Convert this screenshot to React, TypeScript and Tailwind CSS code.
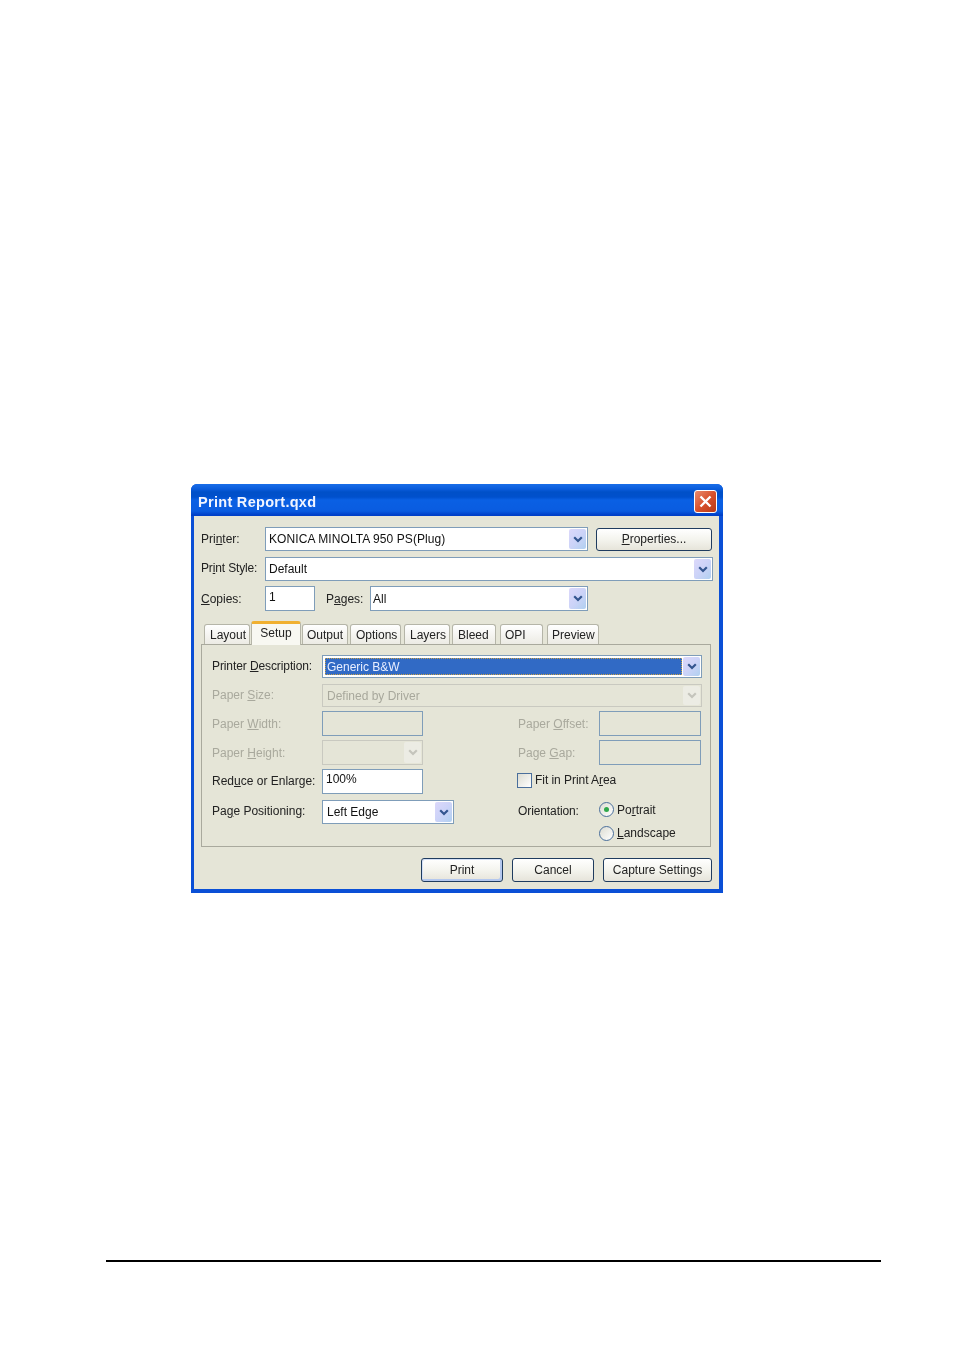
import React from 'react';

const Chevron = ({ disabled }: { disabled?: boolean }) => (
  <svg width="10" height="7" viewBox="0 0 10 7" fill="none">
    <path d="M1.2 1.2 L5 5 L8.8 1.2" stroke={disabled ? '#c4c4bc' : '#33558f'} strokeWidth="2.2" />
  </svg>
);

const Arrow = ({ disabled }: { disabled?: boolean }) => (
  <div
    className={
      disabled
        ? 'w-[17px] flex items-center justify-center rounded-[2px] bg-[#ecece4]'
        : 'w-[17px] flex items-center justify-center rounded-[2px] bg-gradient-to-br from-[#dcd8fa] via-[#ccd3f8] to-[#b0d0f0]'
    }
  >
    <Chevron disabled={disabled} />
  </div>
);

const Select = ({
  value,
  className,
  textClass,
  disabled,
  selected,
}: {
  value?: string;
  className: string;
  textClass?: string;
  disabled?: boolean;
  selected?: boolean;
}) => (
  <div
    className={`flex p-[1px] border ${
      disabled ? 'bg-[#e5e5d7] border-[#c9c9c0] text-[#a8a89c]' : 'bg-white border-[#7f9db9] text-[#111]'
    } ${className}`}
  >
    <div className="flex-1 flex min-w-0 p-[1px]">
      <div
        className={`flex-1 flex items-center ${
          selected ? 'bg-[#316ac5] text-[#e8eeff] border border-dotted border-[#c9a24a] pl-[1px]' : 'pl-[2px]'
        }`}
      >
        <span className={textClass}>{value}</span>
      </div>
    </div>
    <Arrow disabled={disabled} />
  </div>
);

const Input = ({ value, className }: { value?: string; className: string }) => (
  <div className={`border border-[#7f9db9] pl-[3px] text-[#111] ${className}`}>{value}</div>
);

const Button = ({ children, className }: { children: React.ReactNode; className: string }) => (
  <div
    className={`flex items-center justify-center rounded-[3px] border border-[#1f3c5f] bg-gradient-to-b from-white via-[#f4f4ee] to-[#e6e4da] text-[#222] ${className}`}
  >
    {children}
  </div>
);

const Tab = ({ children, className }: { children: React.ReactNode; className: string }) => (
  <div
    className={`h-[20px] mt-[3px] flex items-center rounded-t-[3px] border border-b-0 border-[#b5b5a8] bg-gradient-to-b from-white to-[#ecebe4] text-[#222] ${className}`}
  >
    {children}
  </div>
);

const Muted = ({ children }: { children: React.ReactNode }) => <span className="text-[#a9a99d]">{children}</span>;

export default function App() {
  return (
    <div className="w-[953px] h-[1352px] bg-white pt-[484px] font-['Liberation_Sans',Arial,sans-serif] text-[12px] overflow-hidden">
      <div className="ml-[191px] w-[532px] h-[409px] flex flex-col rounded-t-[6px] bg-[#0a4fd6] overflow-hidden blur-[0.3px]">
        {/* title bar */}
        <div className="h-[32px] shrink-0 flex items-center justify-between pl-[7px] pr-[6px] bg-[linear-gradient(to_bottom,#1a6ee8_0px,#0a5cdc_5px,#0050c8_8px,#0050cc_13px,#0a60e4_16px,#0a5ce0_27px,#0040c8_31px)]">
          <span className="text-[14.5px] font-bold tracking-[0.3px] text-[#f2f5ff] mt-[5px]">Print Report.qxd</span>
          <div className="mt-[2px] w-[23px] h-[23px] flex items-center justify-center rounded-[3px] border border-white bg-gradient-to-br from-[#e88a6c] via-[#d8512c] to-[#b83a18]">
            <svg width="13" height="13" viewBox="0 0 13 13">
              <path d="M1.5 1.5 L11.5 11.5 M11.5 1.5 L1.5 11.5" stroke="#fff" strokeWidth="2.4" />
            </svg>
          </div>
        </div>

        {/* body */}
        <div className="flex-1 ml-[3px] mr-[4px] mb-[4px] bg-[#e5e5d7] pl-[7px] pt-[11px] text-[#222]">
          <div className="flex items-center h-[24px]">
            <span className="w-[64px]">Pri<u>n</u>ter:</span>
            <Select value="KONICA MINOLTA 950 PS(Plug)" textClass="-ml-[1px] tracking-[0.08px]" className="w-[323px] h-[24px]" />
            <Button className="w-[116px] h-[23px] ml-[8px]"><span><u>P</u>roperties...</span></Button>
          </div>
          <div className="flex items-center h-[24px] mt-[6px]">
            <span className="w-[64px] -mt-[2px] tracking-[-0.15px]">Pr<u>i</u>nt Style:</span>
            <Select value="Default" textClass="-ml-[1px]" className="w-[448px] h-[24px]" />
          </div>
          <div className="flex items-center h-[25px] mt-[5px]">
            <span className="w-[64px]"><u>C</u>opies:</span>
            <Input value="1" className="w-[50px] h-[25px] bg-white leading-[21px]" />
            <span className="ml-[11px] w-[44px]">P<u>a</u>ges:</span>
            <Select value="All" textClass="-ml-[2px]" className="w-[218px] h-[25px]" />
          </div>

          {/* tabs */}
          <div className="flex h-[23px] mt-[10px] pl-[3px]">
            <Tab className="w-[46px] pl-[5px]">Layout</Tab>
            <div className="relative z-10 ml-[1px] w-[50px] h-[24px] flex items-center justify-center rounded-t-[3px] border-x border-[#b5b5a8] border-t-[3px] border-t-[#f0b030] bg-[#f8f8f2] text-[#222] pb-[3px]">Setup</div>
            <Tab className="w-[46px] ml-[1px] pl-[4px]">Output</Tab>
            <Tab className="w-[51px] ml-[2px] pl-[5px]">Options</Tab>
            <Tab className="w-[46px] ml-[3px] pl-[5px]">Layers</Tab>
            <Tab className="w-[44px] ml-[2px] pl-[5px]">Bleed</Tab>
            <Tab className="w-[43px] ml-[4px] pl-[4px]">OPI</Tab>
            <Tab className="w-[52px] ml-[4px] pl-[4px]">Preview</Tab>
          </div>

          {/* panel */}
          <div className="w-[510px] h-[203px] border border-[#a9a99d] pl-[10px] pt-[10px]">
            <div className="flex items-center h-[23px]">
              <span className="w-[110px] -mt-[2px] tracking-[-0.1px]">Printer <u>D</u>escription:</span>
              <Select value="Generic B&W" selected className="w-[380px] h-[23px]" />
            </div>
            <div className="flex items-center h-[23px] mt-[6px]">
              <span className="w-[110px] -mt-[2px]"><Muted>Paper <u>S</u>ize:</Muted></span>
              <Select value="Defined by Driver" disabled className="w-[380px] h-[23px]" />
            </div>
            <div className="flex items-center h-[25px] mt-[4px]">
              <span className="w-[110px]"><Muted>Paper <u>W</u>idth:</Muted></span>
              <Input className="w-[101px] h-[25px]" />
              <span className="w-[176px] pl-[95px] whitespace-nowrap"><Muted>Paper <u>O</u>ffset:</Muted></span>
              <Input className="w-[102px] h-[25px]" />
            </div>
            <div className="flex items-center h-[25px] mt-[4px]">
              <span className="w-[110px]"><Muted>Paper <u>H</u>eight:</Muted></span>
              <Select disabled className="w-[101px] h-[25px]" />
              <span className="w-[176px] pl-[95px] whitespace-nowrap"><Muted>Page <u>G</u>ap:</Muted></span>
              <Input className="w-[102px] h-[25px]" />
            </div>
            <div className="flex items-center h-[25px] mt-[4px]">
              <span className="w-[110px] -mt-[2px]">Red<u>u</u>ce or Enlarge:</span>
              <Input value="100%" className="w-[101px] h-[25px] bg-white leading-[19px]" />
              <div className="flex items-center ml-[94px] -mt-[2px]">
                <div className="w-[15px] h-[15px] border border-[#4a6f9c] bg-gradient-to-br from-[#dcdcd2] to-white" />
                <span className="ml-[3px] -mt-[2px] tracking-[-0.05px]">Fit in Print A<u>r</u>ea</span>
              </div>
            </div>
            <div className="flex h-[47px] mt-[6px]">
              <span className="w-[110px] mt-[2px]">Pa<u>g</u>e Positioning:</span>
              <Select value="Left Edge" className="w-[132px] h-[24px]" />
              <span className="ml-[64px] w-[81px] mt-[2px] tracking-[-0.1px]">Orientation:</span>
              <div className="flex flex-col mt-[1px] gap-[8px]">
                <div className="flex items-center h-[16px]">
                  <div className="w-[15px] h-[15px] rounded-full border border-[#4a6f9c] bg-gradient-to-br from-[#dcdcd2] to-white flex items-center justify-center">
                    <div className="w-[5px] h-[5px] rounded-full bg-[#2fa84a]" />
                  </div>
                  <span className="ml-[3px] mt-[2px]">Po<u>r</u>trait</span>
                </div>
                <div className="flex items-center h-[16px]">
                  <div className="w-[15px] h-[15px] rounded-full border border-[#4a6f9c] bg-gradient-to-br from-[#dcdcd2] to-white" />
                  <span className="ml-[3px]"><u>L</u>andscape</span>
                </div>
              </div>
            </div>
          </div>

          {/* buttons */}
          <div className="flex mt-[11px] pl-[220px] gap-[9px]">
            <Button className="w-[82px] h-[24px] shadow-[inset_-2px_-2px_0_#b4c8ee,inset_1px_1px_0_#d4e0f6]">Print</Button>
            <Button className="w-[82px] h-[24px]">Cancel</Button>
            <Button className="w-[109px] h-[24px]">Capture Settings</Button>
          </div>
        </div>
      </div>

      <div className="ml-[106px] mt-[367px] w-[775px] h-[2px] bg-black" />
    </div>
  );
}
